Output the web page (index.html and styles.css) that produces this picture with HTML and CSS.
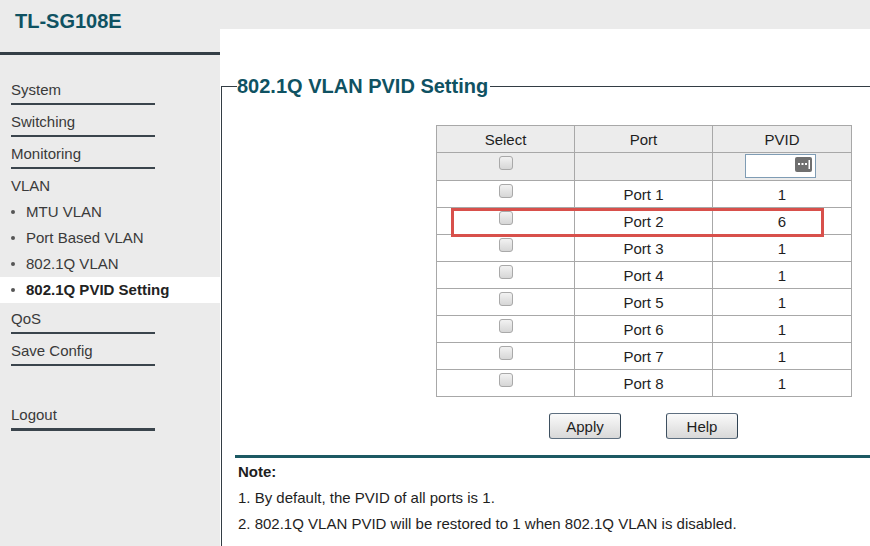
FILE: index.html
```html
<!DOCTYPE html>
<html>
<head>
<meta charset="utf-8">
<title>TL-SG108E</title>
<link rel="stylesheet" href="styles.css">
</head>
<body>
<div class="page">
  <aside class="sidebar">
    <div class="brand">TL-SG108E</div>
    <nav class="nav">
      <a class="nav-item">System</a>
      <a class="nav-item">Switching</a>
      <a class="nav-item">Monitoring</a>
      <div class="nav-group">VLAN</div>
      <ul class="sub">
        <li class="sub-item">MTU VLAN</li>
        <li class="sub-item">Port Based VLAN</li>
        <li class="sub-item">802.1Q VLAN</li>
        <li class="sub-item active">802.1Q PVID Setting</li>
      </ul>
      <a class="nav-item first-after-sub">QoS</a>
      <a class="nav-item">Save Config</a>
      <a class="nav-item logout">Logout</a>
    </nav>
  </aside>
  <main class="main">
    <fieldset class="panel">
      <legend class="panel-title">802.1Q VLAN PVID Setting</legend>
      <div class="table-row">
        <div class="table-box">
          <table class="pvid">
            <colgroup><col class="c1"><col class="c2"><col class="c3"></colgroup>
            <thead>
              <tr class="head"><th>Select</th><th>Port</th><th>PVID</th></tr>
            </thead>
            <tbody>
              <tr class="all">
                <td class="sel"><span class="cb"></span></td>
                <td></td>
                <td class="inp-cell"><span class="inp"><svg class="inp-icon" width="17" height="15" viewBox="0 0 17 15"><rect x="0" y="0" width="17" height="15" rx="2" fill="#6f6f6f"/><rect x="3" y="6" width="2" height="2" fill="#fff"/><rect x="6.5" y="6" width="2" height="2" fill="#fff"/><rect x="10" y="6" width="2" height="2" fill="#fff"/><rect x="13.5" y="3" width="1.5" height="9" fill="#fff"/></svg></span></td>
              </tr>
              <tr><td class="sel"><span class="cb"></span></td><td>Port 1</td><td>1</td></tr>
              <tr><td class="sel"><span class="cb"></span></td><td>Port 2</td><td>6</td></tr>
              <tr><td class="sel"><span class="cb"></span></td><td>Port 3</td><td>1</td></tr>
              <tr><td class="sel"><span class="cb"></span></td><td>Port 4</td><td>1</td></tr>
              <tr><td class="sel"><span class="cb"></span></td><td>Port 5</td><td>1</td></tr>
              <tr><td class="sel"><span class="cb"></span></td><td>Port 6</td><td>1</td></tr>
              <tr><td class="sel"><span class="cb"></span></td><td>Port 7</td><td>1</td></tr>
              <tr><td class="sel"><span class="cb"></span></td><td>Port 8</td><td>1</td></tr>
            </tbody>
          </table>
          <div class="highlight"></div>
          <div class="actions">
            <button class="btn">Apply</button>
            <button class="btn">Help</button>
          </div>
        </div>
      </div>
      <div class="note">
        <div class="note-title">Note:</div>
        <div class="note-line">1. By default, the PVID of all ports is 1.</div>
        <div class="note-line">2. 802.1Q VLAN PVID will be restored to 1 when 802.1Q VLAN is disabled.</div>
      </div>
    </fieldset>
  </main>
</div>
</body>
</html>
```
FILE: styles.css
```css
html, body {
  margin: 0;
  padding: 0;
  height: 100%;
  overflow: hidden;
}
body {
  background: #ebebeb;
  font-family: "Liberation Sans", Arial, sans-serif;
  font-size: 15px;
  color: #333;
}
.page {
  display: flex;
  height: 546px;
}
.sidebar {
  width: 220px;
  flex: none;
}
.brand {
  height: 55px;
  box-sizing: border-box;
  padding: 10px 0 0 15px;
  line-height: 23px;
  font-size: 20px;
  font-weight: bold;
  color: #0f5262;
  border-bottom: 3px solid #343e46;
}
.nav {
  display: flex;
  flex-direction: column;
  padding-top: 22px;
}
.nav-item {
  display: block;
  margin: 0 65px 4px 11px;
  padding: 4px 0;
  line-height: 18px;
  border-bottom: 2px solid #3a444c;
  color: #3a3a3a;
}
.nav-group {
  margin-left: 11px;
  padding: 4px 0;
  line-height: 18px;
  color: #3a3a3a;
}
.sub {
  list-style: none;
  margin: 0;
  padding: 0;
}
.sub-item {
  position: relative;
  line-height: 26px;
  padding-left: 26px;
  color: #3a3a3a;
}
.sub-item::before {
  content: "";
  position: absolute;
  left: 11px;
  top: 11px;
  width: 4px;
  height: 4px;
  border-radius: 50%;
  background: #555;
}
.sub-item.active {
  background: #fff;
  font-weight: bold;
  color: #222;
}
.first-after-sub {
  margin-top: 3px;
}
.logout {
  margin-top: 32px;
  border-bottom-width: 3px;
}
.main {
  flex: 1;
  margin-top: 29px;
  background: #fff;
  overflow: hidden;
}
.panel {
  box-sizing: border-box;
  margin: 45px 0 0 1px;
  padding: 0 0 0 15px;
  border: 1px solid #333d44;
  border-right: none;
  border-bottom: none;
  min-width: 0;
  height: 472px;
}
.panel-title {
  padding: 0 2px 0 0;
  font-size: 20px;
  line-height: 24px;
  font-weight: bold;
  color: #0f5262;
}
.table-row {
  display: flex;
  justify-content: flex-end;
  padding-right: 19px;
  margin-top: 27px;
}
.table-box {
  position: relative;
  width: 415px;
}
.pvid {
  width: 415px;
  table-layout: fixed;
  border-collapse: collapse;
  font-size: 15px;
  color: #1e1e1e;
}
.c1 { width: 138px; }
.c2 { width: 138px; }
.c3 { width: 139px; }
.pvid th, .pvid td {
  border: 1px solid #a8a8a8;
  padding: 0;
  text-align: center;
  font-weight: normal;
  height: 26px;
}
.pvid tr.head th {
  height: 26px;
  background: #ececec;
}
.pvid tr.all td {
  height: 26px;
  background: #ececec;
}
.pvid td.sel {
  vertical-align: top;
  padding-top: 3px;
  box-sizing: border-box;
}
.cb {
  display: block;
  margin: 0 auto;
  width: 12px;
  height: 12px;
  border: 1px solid #a9a9a9;
  border-radius: 3px;
  background: linear-gradient(#f2f2f2, #d6d6d6);
}
.pvid td.inp-cell {
  vertical-align: top;
  padding-top: 1px;
}
.inp {
  display: block;
  width: 69px;
  height: 22px;
  margin: 0 auto;
  border: 1px solid #7f9cb4;
  background: #fff;
  position: relative;
  left: -2px;
}
.inp-icon {
  position: absolute;
  right: 3px;
  top: 2px;
}
.highlight {
  position: absolute;
  left: 15px;
  top: 83px;
  width: 367px;
  height: 23px;
  border: 3px solid #d8504b;
}
.actions {
  display: flex;
  justify-content: center;
  gap: 45px;
  margin-top: 16px;
}
.btn {
  width: 72px;
  height: 26px;
  padding: 0;
  font-family: "Liberation Sans", Arial, sans-serif;
  font-size: 15px;
  color: #1e1e1e;
  border: 1px solid #5e6f80;
  border-left-color: #3e5060;
  border-right-color: #2f4252;
  border-radius: 3px;
  background: linear-gradient(#fafafa, #e6e6e6 60%, #d8d8d8);
}
.note {
  margin-top: 16px;
  margin-left: -2px;
  border-top: 3px solid #1c5963;
  padding: 1px 0 0 3px;
  line-height: 26px;
  font-size: 15px;
  color: #1e1e1e;
}
.note-title {
  font-weight: bold;
}
```
